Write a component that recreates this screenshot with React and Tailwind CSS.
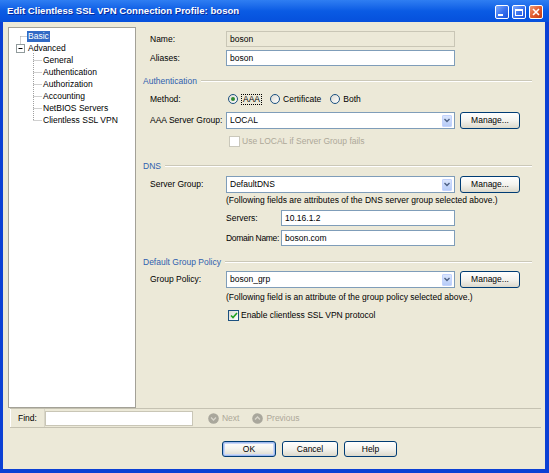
import React from 'react';

const WinButton = ({ kind }) => {
    if (kind === 'close') {
        return (
            <div className="w-[14px] h-[14px] rounded-[2px] border border-white bg-gradient-to-br from-[#ef9a74] via-[#e25a2c] to-[#c23a12] flex items-center justify-center">
                <svg width="8" height="8" viewBox="0 0 8 8">
                    <path d="M1 1 L7 7 M7 1 L1 7" stroke="white" strokeWidth="1.6" />
                </svg>
            </div>
        );
    }
    return (
        <div className="w-[14px] h-[14px] rounded-[2px] border border-white bg-gradient-to-br from-[#7fa8fb] via-[#3a73ef] to-[#1c52dc] flex items-center justify-center">
            {kind === 'min' ? (
                <div className="w-[5px] h-[2px] bg-white mt-[6px] mr-[3px]" />
            ) : (
                <div className="w-[8px] h-[7px] border border-white border-t-2" />
            )}
        </div>
    );
};

const Section = ({ title, className }) => (
    <div className={`flex items-center pl-[6px] pr-[9px] h-[14px] ${className}`}>
        <span className="text-[#2f5fae] pr-[4px]">{title}</span>
        <div className="flex-1 h-0 border-t border-t-[#cbc8b8] border-b border-b-white" />
    </div>
);

const Row = ({ label, className, children }) => (
    <div className={`flex items-center pl-[13px] ${className}`}>
        <span className="w-[76px] shrink-0 whitespace-nowrap">{label}</span>
        {children}
    </div>
);

const TextBox = ({ value, className, disabled }) => (
    <div
        className={`h-full shrink-0 border flex items-center px-[3px] ${
            disabled ? 'bg-[#ece9d8] border-[#c9c6b6]' : 'bg-white border-[#7f9db9]'
        } ${className}`}
    >
        {value}
    </div>
);

const Combo = ({ value }) => (
    <div className="w-[229px] h-full bg-white border border-[#7f9db9] flex items-center pl-[3px] pr-[2px]">
        <span className="flex-1">{value}</span>
        <div className="w-[10px] h-[12px] rounded-[1px] bg-gradient-to-b from-[#dbe6fd] to-[#b6cbf7] border border-[#c3d3fd] flex items-center justify-center">
            <svg width="6" height="5" viewBox="0 0 6 5">
                <path d="M0.5 1 L3 3.5 L5.5 1" stroke="#4d6185" strokeWidth="1.4" fill="none" />
            </svg>
        </div>
    </div>
);

const XpButton = ({ children, className }) => (
    <div
        className={`h-full rounded-[3px] border border-[#003c74] bg-gradient-to-b from-white via-[#f4f3ee] to-[#dcd9cc] flex items-center justify-center ${className}`}
    >
        {children}
    </div>
);

const Radio = ({ checked }) => (
    <div className="w-[10px] h-[10px] rounded-full border border-[#1c5180] bg-gradient-to-br from-[#dcdbd3] to-white flex items-center justify-center">
        {checked && <div className="w-[4px] h-[4px] rounded-full bg-[#2f8a2f]" />}
    </div>
);

const CheckBox = ({ checked, disabled }) => (
    <div
        className={`w-[11px] h-[11px] border flex items-center justify-center ${
            disabled ? 'border-[#cac8bb] bg-white' : 'border-[#1c5180] bg-gradient-to-br from-[#dcdbd3] to-white'
        }`}
    >
        {checked && (
            <svg width="8" height="7" viewBox="0 0 8 7">
                <path d="M1 3.5 L3 5.5 L7 1" stroke="#21a121" strokeWidth="1.6" fill="none" />
            </svg>
        )}
    </div>
);

const Tree = () => {
    const children = ['General', 'Authentication', 'Authorization', 'Accounting', 'NetBIOS Servers', 'Clientless SSL VPN'];
    return (
        <div className="relative w-[128px] h-full bg-white border border-[#a3a197] pt-[2px]">
            <svg className="absolute left-0 top-0" width="126" height="120">
                <g stroke="#a0a0a0" strokeDasharray="1 1" fill="none">
                    <path d="M11.5 8.5 H18" />
                    <path d="M11.5 8.5 V16" />
                    <path d="M24.5 25 V92.5" />
                    {[32, 44, 56, 68, 80, 92].map((y) => (
                        <path key={y} d={`M24.5 ${y + 0.5} H33`} />
                    ))}
                </g>
                <rect x="7.5" y="16.5" width="8" height="8" fill="white" stroke="#919b9c" />
                <path d="M9.5 20.5 H13.5" stroke="#000" />
            </svg>
            <div className="h-[12px] flex items-center pl-[18px]">
                <span className="bg-[#316ac5] text-white px-[1px] leading-[11px]">Basic</span>
            </div>
            <div className="h-[12px] flex items-center pl-[19px]">Advanced</div>
            {children.map((c) => (
                <div key={c} className="h-[12px] flex items-center pl-[34px]">
                    {c}
                </div>
            ))}
        </div>
    );
};

const NavIcon = ({ dir }) => (
    <svg width="11" height="11" viewBox="0 0 11 11">
        <circle cx="5.5" cy="5.5" r="5.3" fill="#a9a79c" />
        <path d={dir === 'down' ? 'M3 4.5 L5.5 7 L8 4.5' : 'M3 6.5 L5.5 4 L8 6.5'} stroke="#d8d6cc" strokeWidth="1.3" fill="none" />
    </svg>
);

export default function App() {
    return (
        <div className="w-[549px] h-[473px] flex flex-col font-['Liberation_Sans',Arial,sans-serif] text-[8.5px] text-black overflow-hidden">
            <div className="h-[22px] shrink-0 flex items-center bg-gradient-to-b from-[#2f7ef2] via-[#0a5be4] to-[#0650dc] pl-[7px] pr-[6px]">
                <span className="flex-1 text-white font-bold text-[9.6px] [text-shadow:1px_1px_0_#0b2a9a]">
                    Edit Clientless SSL VPN Connection Profile: boson
                </span>
                <div className="flex gap-[3px] mt-[2px]">
                    <WinButton kind="min" />
                    <WinButton kind="max" />
                    <WinButton kind="close" />
                </div>
            </div>

            <div className="flex-1 flex flex-col bg-[#ece9d8] border-l-[3px] border-r-[4px] border-b-[4px] border-[#0b40d4]">
                <div className="h-[386px] shrink-0 flex pt-[5px] pl-[5px] pr-[4px]">
                    <Tree />
                    <div className="ml-[1px] flex-1 flex flex-col">
                        <Row label="Name:" className="mt-[4px] h-[16px]">
                            <TextBox value="boson" disabled className="w-[229px]" />
                        </Row>
                        <Row label="Aliases:" className="mt-[3px] h-[16px]">
                            <TextBox value="boson" className="w-[229px]" />
                        </Row>

                        <Section title="Authentication" className="mt-[8px]" />
                        <Row label="Method:" className="mt-[4px] h-[14px]">
                            <div className="flex items-center ml-[2px]">
                                <Radio checked />
                                <span className="ml-[3px] px-[1px] border border-dotted border-black leading-[9px]">AAA</span>
                                <div className="ml-[8px]">
                                    <Radio />
                                </div>
                                <span className="ml-[3px]">Certificate</span>
                                <div className="ml-[9px]">
                                    <Radio />
                                </div>
                                <span className="ml-[3px]">Both</span>
                            </div>
                        </Row>
                        <Row label="AAA Server Group:" className="mt-[6px] h-[17px]">
                            <Combo value="LOCAL" />
                            <XpButton className="ml-[5px] w-[60px]">Manage...</XpButton>
                        </Row>
                        <div className="mt-[6px] h-[12px] flex items-center pl-[92px] text-[#aca899]">
                            <CheckBox disabled />
                            <span className="ml-[2px]">Use LOCAL if Server Group fails</span>
                        </div>

                        <Section title="DNS" className="mt-[12px]" />
                        <Row label="Server Group:" className="mt-[3px] h-[17px]">
                            <Combo value="DefaultDNS" />
                            <XpButton className="ml-[5px] w-[60px]">Manage...</XpButton>
                        </Row>
                        <div className="mt-[1px] h-[12px] flex items-center pl-[89px] whitespace-nowrap">
                            (Following fields are attributes of the DNS server group selected above.)
                        </div>
                        <div className="mt-[4px] h-[16px] flex items-center pl-[89px]">
                            <span className="w-[55px] shrink-0 whitespace-nowrap">Servers:</span>
                            <TextBox value="10.16.1.2" className="w-[174px]" />
                        </div>
                        <div className="mt-[4px] h-[16px] flex items-center pl-[89px]">
                            <span className="w-[55px] shrink-0 whitespace-nowrap tracking-[-0.3px]">Domain Name:</span>
                            <TextBox value="boson.com" className="w-[174px]" />
                        </div>

                        <Section title="Default Group Policy" className="mt-[9px]" />
                        <Row label="Group Policy:" className="mt-[2px] h-[17px]">
                            <Combo value="boson_grp" />
                            <XpButton className="ml-[5px] w-[60px]">Manage...</XpButton>
                        </Row>
                        <div className="mt-[3px] h-[12px] flex items-center pl-[89px] whitespace-nowrap">
                            (Following field is an attribute of the group policy selected above.)
                        </div>
                        <div className="mt-[6px] h-[12px] flex items-center pl-[91px]">
                            <CheckBox checked />
                            <span className="ml-[2px]">Enable clientless SSL VPN protocol</span>
                        </div>
                    </div>
                </div>

                <div className="h-[20px] shrink-0 ml-[7px] mr-[4px] flex items-center border-t border-t-[#c5c2b2] border-b border-b-[#c5c2b2]">
                    <div className="h-full flex items-center px-[7px] border-l border-white border-r border-r-[#d8d5c6]">Find:</div>
                    <div className="w-[148px] h-[15px] bg-white border border-[#c9c6b6]" />
                    <div className="ml-[15px] flex items-center text-[#aca899]">
                        <NavIcon dir="down" />
                        <span className="ml-[3px]">Next</span>
                        <div className="ml-[13px] flex items-center">
                            <NavIcon dir="up" />
                        </div>
                        <span className="ml-[3px]">Previous</span>
                    </div>
                </div>

                <div className="mt-[13px] h-[16px] flex pl-[219px] gap-[6px]">
                    <XpButton className="w-[54px] shadow-[inset_0_0_0_1px_#9fb9ee,inset_0_0_0_2px_#c8d6f6]">OK</XpButton>
                    <XpButton className="w-[56px]">Cancel</XpButton>
                    <XpButton className="w-[53px]">Help</XpButton>
                </div>
            </div>
        </div>
    );
}
